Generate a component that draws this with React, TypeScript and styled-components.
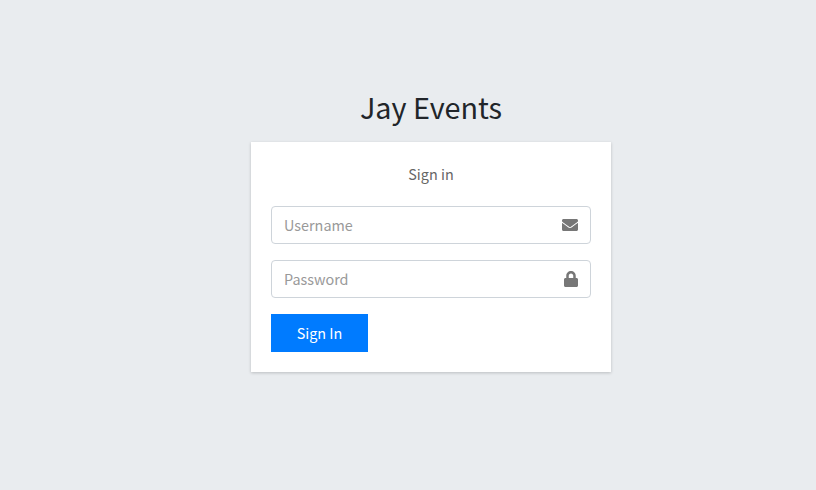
import React from "react";
import styled, { createGlobalStyle } from "styled-components";
import { FaEnvelope, FaLock } from "react-icons/fa";

const Global = createGlobalStyle`
  html, body { margin: 0; height: 100%; background: #e9ecef; }
  body { font-family: "Noto Sans CJK KR", "Noto Sans", sans-serif; }
  * { box-sizing: border-box; }
`;
const Page = styled.div`
  width: 816px; height: 490px; display: flex; flex-direction: column; align-items: center; padding-top: 87px; padding-left: 46px; background: #e9ecef;
`;
const Logo = styled.h1`
  margin: 0 0 15px; font-size: 28.8px; line-height: 40px; font-weight: 400; color: #212529; text-align: center;
`;
const Card = styled.form`
  width: 360px; background: #fff; padding: 20px; box-shadow: 0 1px 3px rgba(0,0,0,.2);
`;
const Message = styled.p`
  margin: 0 0 21px; padding-top: 1px; font-size: 14.4px; line-height: 22px; color: #666; text-align: center;
`;
const Field = styled.div`
  height: 38px; display: flex; align-items: center; justify-content: space-between; border: 1px solid #ced4da; border-radius: 4px; padding: 0 12px; margin-bottom: 16px; color: #777;
`;
const Input = styled.input`
  flex: 1; min-width: 0; border: 0; outline: 0; padding: 0 0 2px; background: transparent; font: inherit; font-size: 14.4px; color: #495057;
  &::placeholder { color: #999; opacity: 1; }
`;
const MailIcon = styled(FaEnvelope)`
  display: block; flex: none; width: 16px; height: 16px;
`;
const LockIcon = styled(FaLock)`
  display: block; flex: none; width: 14px; height: 16px;
`;
const Submit = styled.button`
  display: block; width: 97px; height: 38px; border: 0; background: #007bff; color: #fff; font: inherit; font-size: 14.4px; padding: 0 0 2px;
`;
export default function App() {
  return (
    <Page>
      <Global />
      <Logo>Jay Events</Logo>
      <Card onSubmit={(e) => e.preventDefault()}>
        <Message>Sign in</Message>
        <Field>
          <Input placeholder="Username" />
          <MailIcon />
        </Field>
        <Field>
          <Input type="password" placeholder="Password" />
          <LockIcon />
        </Field>
        <Submit>Sign In</Submit>
      </Card>
    </Page>
  );
}
